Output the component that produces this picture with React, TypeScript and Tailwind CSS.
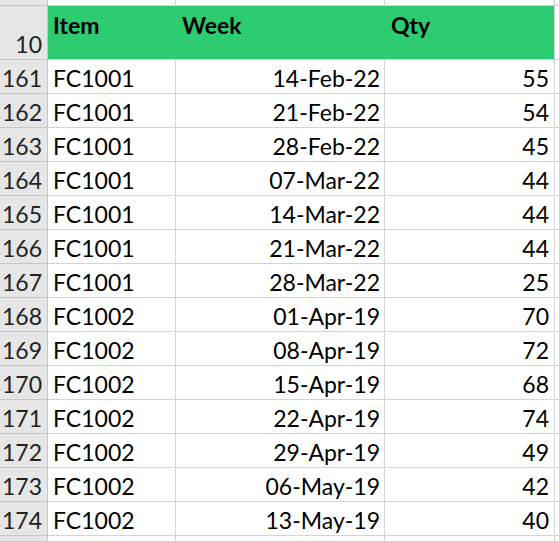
const rows = [
  { n: 161, item: "FC1001", week: "14-Feb-22", qty: 55 },
  { n: 162, item: "FC1001", week: "21-Feb-22", qty: 54 },
  { n: 163, item: "FC1001", week: "28-Feb-22", qty: 45 },
  { n: 164, item: "FC1001", week: "07-Mar-22", qty: 44 },
  { n: 165, item: "FC1001", week: "14-Mar-22", qty: 44 },
  { n: 166, item: "FC1001", week: "21-Mar-22", qty: 44 },
  { n: 167, item: "FC1001", week: "28-Mar-22", qty: 25 },
  { n: 168, item: "FC1002", week: "01-Apr-19", qty: 70 },
  { n: 169, item: "FC1002", week: "08-Apr-19", qty: 72 },
  { n: 170, item: "FC1002", week: "15-Apr-19", qty: 68 },
  { n: 171, item: "FC1002", week: "22-Apr-19", qty: 74 },
  { n: 172, item: "FC1002", week: "29-Apr-19", qty: 49 },
  { n: 173, item: "FC1002", week: "06-May-19", qty: 42 },
  { n: 174, item: "FC1002", week: "13-May-19", qty: 40 },
];

function BlankRow({ h }: { h: string }) {
  return (
    <div className={`flex ${h}`}>
      <div className="w-[48px] shrink-0 bg-[#e6e6e6] border-r border-b border-[#c6c6c6]" />
      <div className="w-[128px] shrink-0 border-r border-b border-[#d4d4d4]" />
      <div className="w-[209px] shrink-0 border-r border-b border-[#d4d4d4]" />
      <div className="w-[170px] shrink-0 border-r border-b border-[#d4d4d4]" />
      <div className="flex-1 border-b border-[#d4d4d4]" />
    </div>
  );
}

export default function App() {
  return (
    <div
      className="w-[559px] h-[542px] overflow-hidden bg-white text-[23px] text-black leading-none"
      style={{ fontFamily: "Lato, 'Liberation Sans', sans-serif" }}
    >
      <BlankRow h="h-[6px]" />

      <div className="flex h-[54px]">
        <div className="w-[48px] shrink-0 bg-[#e6e6e6] border-r border-b border-[#c6c6c6] flex items-end justify-end pr-[5px] pb-[3px] text-[#222]">
          10
        </div>
        <div className="w-[507px] shrink-0 flex bg-[#2ecc71] border-r border-b border-[#d4d4d4] font-bold">
          <div className="w-[128px] pl-[5px] pt-[8px]">Item</div>
          <div className="w-[209px] pl-[6px] pt-[8px]">Week</div>
          <div className="flex-1 pl-[6px] pt-[8px]">Qty</div>
        </div>
        <div className="flex-1 border-b border-[#d4d4d4]" />
      </div>

      {rows.map((r) => (
        <div key={r.n} className="flex h-[34px]">
          <div className="w-[48px] shrink-0 bg-[#e6e6e6] border-r border-b border-[#c6c6c6] flex items-end justify-end pr-[5px] pb-[3px] text-[#222]">
            {r.n}
          </div>
          <div className="w-[128px] shrink-0 border-r border-b border-[#d4d4d4] flex items-end pl-[5px] pb-[3px]">
            {r.item}
          </div>
          <div className="w-[209px] shrink-0 border-r border-b border-[#d4d4d4] flex items-end justify-end pr-[4px] pb-[3px]">
            {r.week}
          </div>
          <div className="w-[170px] shrink-0 border-r border-b border-[#d4d4d4] flex items-end justify-end pr-[5px] pb-[3px]">
            {r.qty}
          </div>
          <div className="flex-1 border-b border-[#d4d4d4]" />
        </div>
      ))}

      <BlankRow h="h-[6px]" />
    </div>
  );
}
